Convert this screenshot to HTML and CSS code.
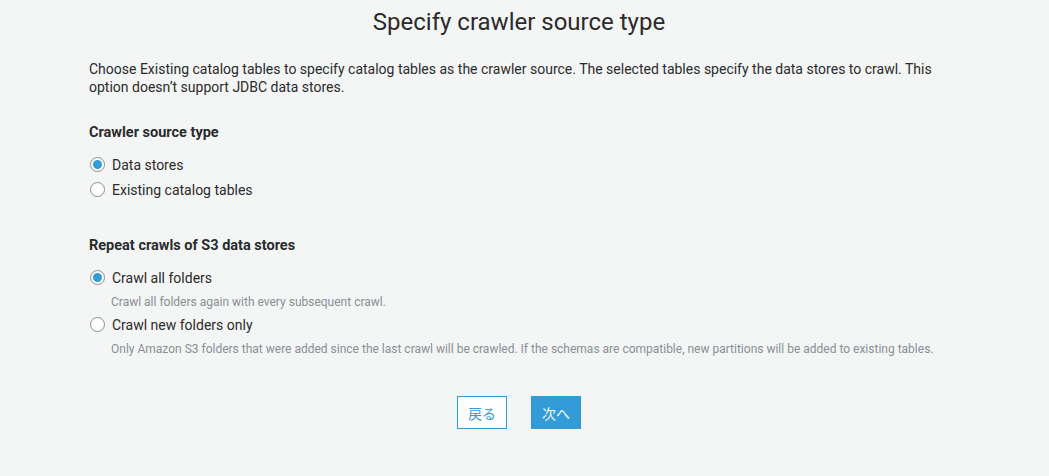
FILE: index.html
```html
<!DOCTYPE html>
<html lang="en">
<head>
  <meta charset="UTF-8" />
  <title>Specify crawler source type</title>
  <link rel="stylesheet" href="styles.css">
</head>
<body>
  <main class="wizard">
    <h1 class="wizard-title">Specify crawler source type</h1>
    <p class="intro">Choose Existing catalog tables to specify catalog tables as the crawler source. The selected tables specify the data stores to crawl. This option doesn’t support JDBC data stores.</p>

    <section class="field">
      <h2 class="field-label">Crawler source type</h2>
      <label class="radio">
        <input type="radio" name="sourceType" checked />
        <span class="radio-mark"></span>
        Data stores
      </label>
      <label class="radio">
        <input type="radio" name="sourceType" />
        <span class="radio-mark"></span>
        Existing catalog tables
      </label>
    </section>

    <section class="field field-repeat">
      <h2 class="field-label">Repeat crawls of S3 data stores</h2>
      <label class="radio">
        <input type="radio" name="repeat" checked />
        <span class="radio-mark"></span>
        Crawl all folders
      </label>
      <p class="radio-hint">Crawl all folders again with every subsequent crawl.</p>
      <label class="radio">
        <input type="radio" name="repeat" />
        <span class="radio-mark"></span>
        Crawl new folders only
      </label>
      <p class="radio-hint">Only Amazon S3 folders that were added since the last crawl will be crawled. If the schemas are compatible, new partitions will be added to existing tables.</p>
    </section>

    <div class="actions">
      <button type="button" class="btn btn-secondary">戻る</button>
      <button type="button" class="btn btn-primary">次へ</button>
    </div>
  </main>
</body>
</html>
```

FILE: styles.css
```css
:root {
  --blue: #339bd8;
  --text: #2b2b2b;
  --muted: #8a8f94;
  --bg: #f4f5f5;
  font-family: Roboto, "Noto Sans CJK JP", sans-serif;
}

* {
  box-sizing: border-box;
  margin: 0;
  padding: 0;
}

body {
  background: var(--bg);
  color: var(--text);
  min-height: 100vh;
}

.wizard {
  width: 860px;
  margin-left: 89px;
  padding-top: 8px;
}

.wizard-title {
  font-size: 24px;
  font-weight: 400;
  line-height: 28px;
  text-align: center;
  margin-bottom: 24px;
}

.intro {
  font-size: 14px;
  line-height: 18px;
  margin-bottom: 28px;
}

.field-label {
  font-size: 14.5px;
  font-weight: 700;
  line-height: 18px;
  margin-bottom: 10px;
}

.field-repeat {
  margin-top: 35px;
}

.radio {
  display: flex;
  align-items: center;
  gap: 7px;
  height: 25px;
  font-size: 14px;
  cursor: pointer;
  width: max-content;
}

.radio input {
  display: none;
}

.radio-mark {
  width: 15px;
  height: 15px;
  border-radius: 50%;
  border: 1px solid #8d8d8d;
  background: #fff;
  margin-left: 1px;
  position: relative;
}

.radio input:checked + .radio-mark::after {
  content: "";
  position: absolute;
  inset: 2px;
  border-radius: 50%;
  background: var(--blue);
}

.radio-hint {
  font-size: 12px;
  line-height: 16px;
  color: var(--muted);
  padding: 4px 0 0 22px;
  margin-bottom: 2px;
}

.actions {
  display: flex;
  justify-content: center;
  gap: 24px;
  margin-top: 39px;
}

.btn {
  width: 50px;
  height: 33px;
  font-family: "Noto Sans CJK JP", sans-serif;
  font-size: 14px;
  border: 1px solid var(--blue);
  cursor: pointer;
}

.btn-secondary {
  background: #fff;
  color: var(--blue);
}

.btn-primary {
  background: var(--blue);
  color: #fff;
}
```
